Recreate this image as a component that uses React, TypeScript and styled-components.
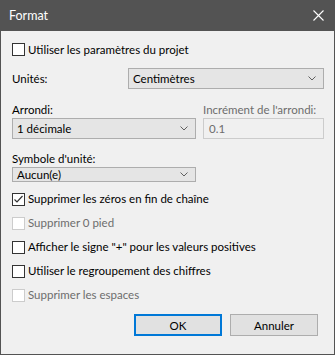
import React, { FC } from 'react';
import styled, { createGlobalStyle } from 'styled-components';

const GlobalStyle = createGlobalStyle`
  html, body {
    margin: 0;
    padding: 0;
    background: #ffffff;
  }
  body {
    font-family: Lato, "Liberation Sans", sans-serif;
    font-size: 11.5px;
    color: #000000;
  }
`;

const Window = styled.div`
  width: 335px;
  height: 355px;
  box-sizing: border-box;
  border: 1px solid #535353;
  border-top: none;
  display: flex;
  flex-direction: column;
  background: #f0f0f0;
`;

const TitleBar = styled.div`
  height: 31px;
  background: #535353;
  display: flex;
  align-items: center;
  justify-content: space-between;
  padding: 0 10px 0 8px;
  color: #ffffff;
  font-size: 12.5px;
`;

const Body = styled.div`
  flex: 1;
  display: flex;
  flex-direction: column;
  padding: 10px 10px 0 11px;
`;

const Row = styled.div<{ $h?: number; $mt?: number }>`
  display: flex;
  align-items: center;
  height: ${p => p.$h ?? 17}px;
  margin-top: ${p => p.$mt ?? 0}px;
`;

const Label = styled.span<{ $disabled?: boolean; $w?: number }>`
  color: ${p => (p.$disabled ? '#6d6d6d' : '#000000')};
  width: ${p => (p.$w ? `${p.$w}px` : 'auto')};
  flex-shrink: 0;
  white-space: nowrap;
  line-height: 16px;
`;

const Box = styled.span<{ $disabled?: boolean }>`
  width: 13px;
  height: 13px;
  box-sizing: border-box;
  border: 1px solid ${p => (p.$disabled ? '#cccccc' : '#333333')};
  background: #ffffff;
  margin-right: 3px;
  display: flex;
  align-items: center;
  justify-content: center;
  flex-shrink: 0;
`;

const SelectBox = styled.div`
  flex: 1;
  height: 21px;
  box-sizing: border-box;
  border: 1px solid #adadad;
  background: #e5e5e5;
  display: flex;
  align-items: center;
  justify-content: space-between;
  padding: 0 7px 0 4px;
`;

const TextBox = styled.div`
  height: 21px;
  box-sizing: border-box;
  border: 1px solid #cccccc;
  background: #f0f0f0;
  color: #6d6d6d;
  display: flex;
  align-items: center;
  padding: 0 5px;
`;

const Split = styled.div`
  display: grid;
  grid-template-columns: 184px 1fr;
  column-gap: 7px;
  margin-top: 13px;
`;

const Field = styled.div<{ $w?: number; $mt?: number }>`
  display: flex;
  flex-direction: column;
  width: ${p => (p.$w ? `${p.$w}px` : 'auto')};
  margin-top: ${p => p.$mt ?? 0}px;
`;

const Caption = styled(Label)`
  height: 16px;
`;

const Buttons = styled.div`
  display: flex;
  justify-content: flex-end;
  gap: 8px;
  margin-top: 7px;
  padding-right: 6px;
`;

const Button = styled.button<{ $primary?: boolean }>`
  width: 88px;
  height: 22px;
  box-sizing: border-box;
  border: ${p => (p.$primary ? '2px solid #0078d7' : '1px solid #adadad')};
  background: #e1e1e1;
  font: inherit;
  color: #000000;
  padding: 0;
`;

const Chevron: FC = () => (
  <svg width="8" height="5" viewBox="0 0 8 5">
    <path d="M0.5 0.5 L4 4 L7.5 0.5" fill="none" stroke="#606060" strokeWidth="1" />
  </svg>
);

const CloseIcon: FC = () => (
  <svg width="11" height="11" viewBox="0 0 11 11">
    <path d="M0.5 0.5 L10.5 10.5 M10.5 0.5 L0.5 10.5" stroke="#ffffff" strokeWidth="1.1" />
  </svg>
);

const Check: FC<{ label: string; checked?: boolean; disabled?: boolean; h?: number; mt?: number }> = ({ label, checked, disabled, h, mt }) => (
  <Row $h={h} $mt={mt}>
    <Box $disabled={disabled}>
      {checked && (
        <svg width="11" height="11" viewBox="0 0 11 11">
          <path d="M1.5 5.5 L4 8 L9.5 2" fill="none" stroke="#333333" strokeWidth="1.2" />
        </svg>
      )}
    </Box>
    <Label $disabled={disabled}>{label}</Label>
  </Row>
);

const Select: FC<{ value: string }> = ({ value }) => (
  <SelectBox>
    <span>{value}</span>
    <Chevron />
  </SelectBox>
);

export default function App() {
  return (
    <>
      <GlobalStyle />
      <Window>
        <TitleBar>
          <span>Format</span>
          <CloseIcon />
        </TitleBar>
        <Body>
          <Check label="Utiliser les paramètres du projet" />
          <Row $h={21} $mt={10}>
            <Label $w={116}>Unités:</Label>
            <Select value="Centimètres" />
          </Row>
          <Split>
            <Field>
              <Caption>Arrondi:</Caption>
              <Select value="1 décimale" />
            </Field>
            <Field>
              <Caption $disabled>Incrément de l'arrondi:</Caption>
              <TextBox>0.1</TextBox>
            </Field>
          </Split>
          <Field $w={184} $mt={12}>
            <Caption>Symbole d'unité:</Caption>
            <Select value="Aucun(e)" />
          </Field>
          <Check label="Supprimer les zéros en fin de chaîne" checked h={24} mt={5} />
          <Check label="Supprimer 0 pied" disabled h={24} />
          <Check label={'Afficher le signe "+" pour les valeurs positives'} h={24} />
          <Check label="Utiliser le regroupement des chiffres" h={24} />
          <Check label="Supprimer les espaces" disabled h={24} />
          <Buttons>
            <Button $primary>OK</Button>
            <Button>Annuler</Button>
          </Buttons>
        </Body>
      </Window>
    </>
  );
}
